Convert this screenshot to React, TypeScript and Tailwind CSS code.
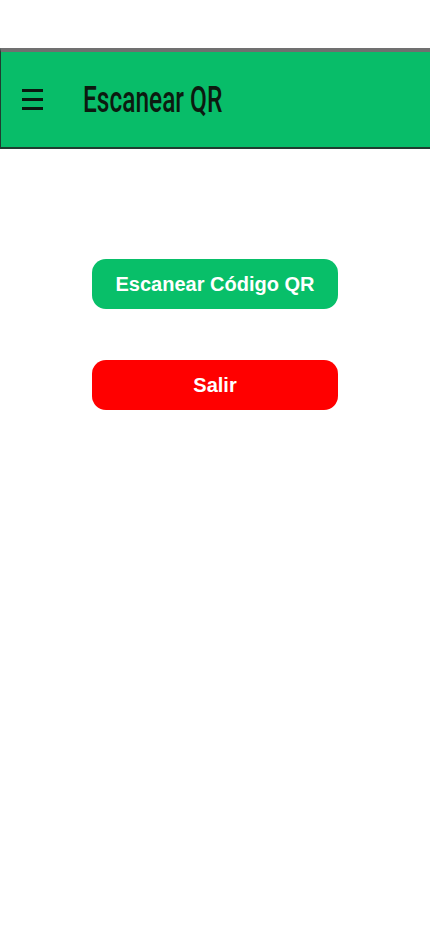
export default function App() {
  return (
    <div className="w-[430px] h-[932px] bg-white flex flex-col" style={{ fontFamily: '"Liberation Sans", Arial, sans-serif' }}>
      <div className="h-[48px]" />
      <div className="h-[101px] border-t-[4px] border-t-[#707070] border-b-[2px] border-b-[#1f3d30] border-l border-l-[#1f3d30] bg-[#08bd69] flex items-center">
        <div className="ml-[21px] w-[21px] flex flex-col gap-[6px]">
          <div className="h-[3px] bg-[#0a1a10]" />
          <div className="h-[3px] bg-[#0a1a10]" />
          <div className="h-[3px] bg-[#0a1a10]" />
        </div>
        <div
          className="ml-[40px] text-[36px] leading-none text-[#0c1a10] origin-left scale-x-[0.68] whitespace-nowrap"
          style={{ fontFamily: 'Roboto, sans-serif', fontWeight: 500 }}
        >
          Escanear QR
        </div>
      </div>
      <div className="flex flex-col items-center pt-[110px] gap-[51px]">
        <button className="w-[246px] h-[50px] rounded-[14px] bg-[#08bf69] text-white font-bold text-[20px]">
          Escanear Código QR
        </button>
        <button className="w-[246px] h-[50px] rounded-[14px] bg-[#ff0000] text-white font-bold text-[20px]">
          Salir
        </button>
      </div>
    </div>
  );
}
